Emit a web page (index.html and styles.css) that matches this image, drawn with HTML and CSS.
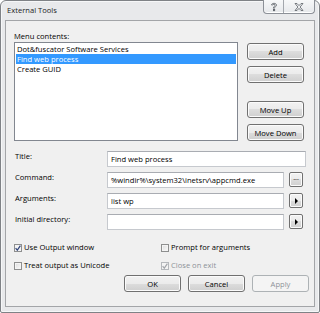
FILE: index.html
```html
<!DOCTYPE html>
<html lang="en">

<head>
    <meta charset="UTF-8">
    <title>External Tools</title>
    <link rel="stylesheet" href="styles.css">
</head>

<body>
    <div class="window">
        <div class="titlebar">
            <span class="title">External Tools</span>
            <div class="caption-buttons">
                <span class="cap-btn help">
                    <svg width="8" height="10" viewBox="0 0 8 10">
                        <path d="M1.5 3 C1.5 0.8 6.5 0.8 6.5 3 C6.5 4.6 4.6 4.6 4.6 6.2 L3.4 6.2 C3.4 4.2 5.2 4.2 5.2 3 C5.2 2 2.8 2 2.8 3 Z" fill="none" stroke="#5a5f66" stroke-width="0.8"/>
                        <rect x="3.4" y="7.4" width="1.3" height="1.3" fill="none" stroke="#5a5f66" stroke-width="0.8"/>
                    </svg>
                </span>
                <span class="cap-btn close">
                    <svg width="10" height="8" viewBox="0 0 10 8">
                        <path d="M1 0.5 L3 0.5 L5 2.6 L7 0.5 L9 0.5 L6.1 4 L9 7.5 L7 7.5 L5 5.4 L3 7.5 L1 7.5 L3.9 4 Z" fill="none" stroke="#5a5f66" stroke-width="0.8"/>
                    </svg>
                </span>
            </div>
        </div>

        <div class="panel">
            <div class="top">
                <div class="menu-col">
                    <div class="label">Menu contents:</div>
                    <ul class="listbox">
                        <li>Dot&amp;fuscator Software Services</li>
                        <li class="selected">Find web process</li>
                        <li>Create GUID</li>
                    </ul>
                </div>
                <div class="side-buttons">
                    <button class="btn">Add</button>
                    <button class="btn">Delete</button>
                    <button class="btn move-up">Move Up</button>
                    <button class="btn">Move Down</button>
                </div>
            </div>

            <div class="fields">
                <label class="field-label">Title:</label>
                <div class="textbox wide">Find web process</div>

                <label class="field-label">Command:</label>
                <div class="textbox">%windir%\system32\inetsrv\appcmd.exe</div>
                <button class="small-btn dots">...</button>

                <label class="field-label">Arguments:</label>
                <div class="textbox">list wp</div>
                <button class="small-btn arrow"><span class="tri"></span></button>

                <label class="field-label">Initial directory:</label>
                <div class="textbox"></div>
                <button class="small-btn arrow"><span class="tri"></span></button>
            </div>

            <div class="checks">
                <div class="check">
                    <span class="box checked">
                        <svg width="6" height="6" viewBox="0 0 6 6"><path d="M0.6 3.2 L2.3 5.2 L5.4 0.6" fill="none" stroke="#31447a" stroke-width="1.2"/></svg>
                    </span>
                    Use Output window
                </div>
                <div class="check">
                    <span class="box"></span>
                    Prompt for arguments
                </div>
                <div class="check">
                    <span class="box"></span>
                    Treat output as Unicode
                </div>
                <div class="check disabled">
                    <span class="box checked">
                        <svg width="6" height="6" viewBox="0 0 6 6"><path d="M0.6 3.2 L2.3 5.2 L5.4 0.6" fill="none" stroke="#a3a6ab" stroke-width="1.2"/></svg>
                    </span>
                    Close on exit
                </div>
            </div>

            <div class="actions">
                <button class="btn">OK</button>
                <button class="btn">Cancel</button>
                <button class="btn" disabled>Apply</button>
            </div>
        </div>
    </div>
</body>

</html>
```

FILE: styles.css
```css
* {
    box-sizing: border-box;
}

body {
    margin: 0;
    font-family: "Open Sans", "Noto Sans", sans-serif;
    font-size: 7.6px;
    color: #000;
    background: #fff;
}

.window {
    width: 320px;
    height: 313px;
    border: 1px solid #7f8286;
    border-radius: 6px 6px 2px 2px;
    background: #e8e9eb;
    box-shadow: inset 0 0 0 1px #f6f7f8;
    display: flex;
    flex-direction: column;
    padding: 0 4px 5px 4px;
}

/* title bar */
.titlebar {
    height: 19px;
    display: flex;
    justify-content: space-between;
    align-items: flex-start;
}

.title {
    padding-left: 2px;
    line-height: 19px;
    color: #1c1c1c;
}

.caption-buttons {
    display: flex;
    margin-top: -1px;
    height: 14px;
    border: 1px solid #8c9097;
    border-top: none;
    border-radius: 0 0 4px 4px;
    background: linear-gradient(#f7f8f9, #e6e8eb);
    box-shadow: inset 0 -1px 0 #fff;
}

.cap-btn {
    display: flex;
    align-items: center;
    justify-content: center;
}

.help {
    width: 20px;
    border-right: 1px solid #a3a7ad;
}

.close {
    width: 30px;
}

/* main panel */
.panel {
    flex: 1;
    border: 1px solid #a3a5a8;
    background: #f0f0f0;
    padding: 10px 5px 0 8px;
}

.top {
    display: flex;
}

.menu-col {
    width: 224px;
}

.label {
    line-height: 11px;
}

.listbox {
    list-style: none;
    margin: 0;
    height: 99px;
    border: 1px solid #828790;
    background: #fff;
    padding: 1px;
}

.listbox li {
    height: 10px;
    line-height: 10px;
    padding-left: 1px;
    white-space: nowrap;
}

.listbox li.selected {
    background: #3399ff;
    color: #fff;
}

.side-buttons {
    margin-left: 9px;
    padding-top: 12px;
    display: flex;
    flex-direction: column;
    gap: 6px;
}

.btn {
    width: 57px;
    height: 17px;
    padding: 0;
    font: inherit;
    color: #000;
    border: 1px solid #707070;
    border-radius: 3px;
    background: linear-gradient(#f2f2f2 0%, #ebebeb 50%, #dddddd 50%, #cfcfcf 100%);
    box-shadow: inset 0 0 0 1px #fbfbfb;
}

.btn.move-up {
    margin-top: 12px;
}

.btn:disabled {
    color: #8d9298;
    border-color: #adb2b5;
    background: #f4f4f4;
    box-shadow: none;
}

/* text fields */
.fields {
    margin-top: 10px;
    display: grid;
    grid-template-columns: 93px 177px 5px 14px 3px;
    grid-auto-rows: 16px;
    row-gap: 5px;
}

.field-label {
    grid-column: 1;
    padding-left: 1px;
    line-height: 11px;
}

.textbox {
    grid-column: 2;
    border: 1px solid #c6c9ce;
    border-top-color: #a9acb2;
    background: #fff;
    padding-left: 3px;
    line-height: 14px;
    white-space: nowrap;
    overflow: hidden;
}

.textbox.wide {
    grid-column: 2 / -1;
}

.small-btn {
    grid-column: 4;
    width: 14px;
    height: 15px;
    padding: 0;
    font: inherit;
    line-height: 10px;
    border: 1px solid #707070;
    border-radius: 2px;
    background: linear-gradient(#f2f2f2 0%, #ebebeb 50%, #dddddd 50%, #cfcfcf 100%);
    box-shadow: inset 0 0 0 1px #fbfbfb;
    display: flex;
    align-items: center;
    justify-content: center;
}

.small-btn.dots {
    align-items: flex-end;
    padding-bottom: 3px;
    font-size: 7px;
}

.tri {
    width: 0;
    height: 0;
    border-top: 3px solid transparent;
    border-bottom: 3px solid transparent;
    border-left: 3px solid #000;
    margin-left: 1px;
}

/* check boxes */
.checks {
    margin-top: 12px;
    display: grid;
    grid-template-columns: 147px 1fr;
    grid-auto-rows: 11px;
    row-gap: 7px;
}

.check {
    display: flex;
    align-items: center;
    gap: 2px;
    line-height: 11px;
}

.box {
    width: 8px;
    height: 8px;
    border: 1px solid #8e8f8f;
    background: linear-gradient(135deg, #dcdcdc, #fbfbfb);
    box-shadow: inset 0 0 0 1px #f4f4f4;
    display: flex;
    align-items: center;
    justify-content: center;
}

.box.checked {
    background: #f4f4f4;
}

.check.disabled {
    color: #8d9298;
}

.check.disabled .box {
    border-color: #b5b8bc;
    background: #f4f4f4;
}

/* dialog buttons */
.actions {
    margin-top: 4px;
    display: flex;
    justify-content: flex-end;
    gap: 7px;
}
```
